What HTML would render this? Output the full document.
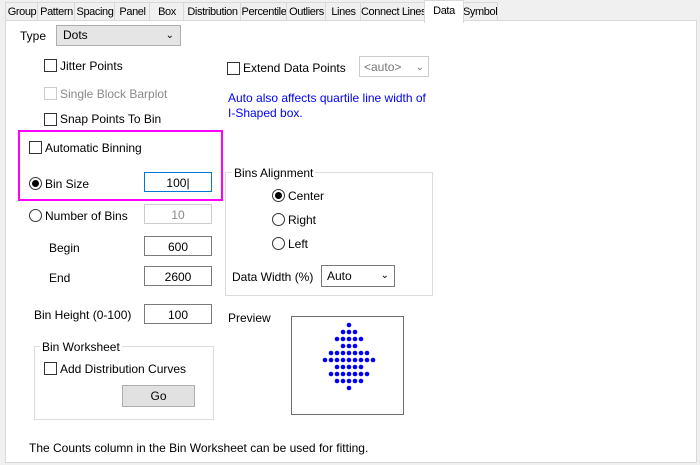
<!DOCTYPE html>
<html><head><style>
body{margin:0;width:700px;height:465px;background:#f0f0f0;font-family:"Liberation Sans",Arial,sans-serif;font-size:12px;color:#000;position:relative;overflow:hidden}
.a{position:absolute;white-space:nowrap}
.tab{position:absolute;top:2px;height:18px;border:1px solid #d9d9d9;border-bottom:none;background:#f0f0f0;font-size:11px;letter-spacing:-0.4px;line-height:18px;text-align:center;white-space:nowrap;overflow:hidden}
.panel{position:absolute;left:5px;top:20px;width:690px;height:441px;background:#fff;border:1px solid #d9d9d9}
.cb{position:absolute;width:11px;height:11px;border:1px solid #333;background:#fff}
.rb{position:absolute;width:11px;height:11px;border:1px solid #333;border-radius:50%;background:#fff}
.rb.on::after{content:"";position:absolute;left:2px;top:2px;width:7px;height:7px;border-radius:50%;background:#000}
.in{position:absolute;height:20px;border:1px solid #7a7a7a;background:#fff;text-align:center;line-height:20px;box-sizing:border-box}
.dd{position:absolute;height:21px;border:1px solid #adadad;background:#e5e5e5;box-sizing:border-box;line-height:19px;padding-left:6px}
.grp{position:absolute;border:1px solid #dcdcdc}
</style></head><body>
<div class="tab" style="left:5px;width:32px">Group</div>
<div class="tab" style="left:37px;width:37px">Pattern</div>
<div class="tab" style="left:74px;width:40px">Spacing</div>
<div class="tab" style="left:114px;width:35px">Panel</div>
<div class="tab" style="left:149px;width:34px">Box</div>
<div class="tab" style="left:183px;width:57px">Distribution</div>
<div class="tab" style="left:240px;width:46px">Percentile</div>
<div class="tab" style="left:286px;width:39px">Outliers</div>
<div class="tab" style="left:325px;width:35px">Lines</div>
<div class="tab" style="left:360px;width:64px">Connect Lines</div>
<div class="tab" style="left:462px;width:34px">Symbol</div>
<div class="panel"></div>
<div class="tab" style="left:424px;top:0;width:38px;height:22px;background:#fff;line-height:20px;z-index:2">Data</div>

<div class="a" style="left:20px;top:29px">Type</div>
<div class="dd" style="left:56px;top:25px;width:125px">Dots<span style="position:absolute;right:6px;top:0;font-size:10px">&#8964;</span></div>

<div class="cb" style="left:44px;top:59px"></div><div class="a" style="left:60px;top:59px">Jitter Points</div>
<div class="cb" style="left:44px;top:87px;border-color:#ccc"></div><div class="a" style="left:60px;top:87px;color:#8a8a8a">Single Block Barplot</div>
<div class="cb" style="left:44px;top:113px"></div><div class="a" style="left:60px;top:112px">Snap Points To Bin</div>

<div class="cb" style="left:227px;top:62px"></div><div class="a" style="left:243px;top:61px">Extend Data Points</div>
<div class="a" style="left:359px;top:56px;width:70px;height:21px;border:1px solid #ccc;background:#fff;color:#777;line-height:21px;padding-left:4px;box-sizing:border-box">&lt;auto&gt;<span style="position:absolute;right:4px;font-size:10px">&#8964;</span></div>
<div class="a" style="left:228px;top:91px;color:#0000ff;line-height:15px">Auto also affects quartile line width of<br>I-Shaped box.</div>

<div class="a" style="left:18px;top:130px;width:201px;height:67px;border:2px solid #ff00ff"></div>
<div class="cb" style="left:29px;top:141px"></div><div class="a" style="left:45px;top:141px">Automatic Binning</div>
<div class="rb on" style="left:29px;top:177px"></div><div class="a" style="left:45px;top:177px">Bin Size</div>
<div class="in" style="left:144px;top:172px;width:68px;border-color:#0078d7">100|</div>

<div class="rb" style="left:29px;top:209px"></div><div class="a" style="left:45px;top:209px">Number of Bins</div>
<div class="in" style="left:144px;top:204px;width:68px;border-color:#ccc;color:#888">10</div>
<div class="a" style="left:49px;top:241px">Begin</div><div class="in" style="left:144px;top:236px;width:68px">600</div>
<div class="a" style="left:49px;top:271px">End</div><div class="in" style="left:144px;top:266px;width:68px">2600</div>
<div class="a" style="left:34px;top:308px">Bin Height (0-100)</div><div class="in" style="left:144px;top:304px;width:68px">100</div>

<div class="grp" style="left:34px;top:346px;width:178px;height:72px"></div>
<div class="a" style="left:40px;top:340px;background:#fff;padding:0 2px">Bin Worksheet</div>
<div class="cb" style="left:44px;top:362px"></div><div class="a" style="left:60px;top:362px">Add Distribution Curves</div>
<div class="a" style="left:122px;top:385px;width:73px;height:22px;border:1px solid #adadad;background:#e1e1e1;text-align:center;line-height:21px;box-sizing:border-box">Go</div>

<div class="grp" style="left:225px;top:172px;width:206px;height:122px"></div>
<div class="a" style="left:232px;top:166px;background:#fff;padding:0 2px">Bins Alignment</div>
<div class="rb on" style="left:272px;top:189px"></div><div class="a" style="left:288px;top:189px">Center</div>
<div class="rb" style="left:272px;top:213px"></div><div class="a" style="left:288px;top:213px">Right</div>
<div class="rb" style="left:272px;top:237px"></div><div class="a" style="left:288px;top:237px">Left</div>
<div class="a" style="left:232px;top:270px">Data Width (%)</div>
<div class="a" style="left:321px;top:265px;width:74px;height:22px;border:1px solid #7a7a7a;background:#fff;line-height:20px;padding-left:5px;box-sizing:border-box">Auto<span style="position:absolute;right:5px;font-size:10px">&#8964;</span></div>

<div class="a" style="left:228px;top:311px">Preview</div>
<div class="a" style="left:291px;top:316px;width:113px;height:99px;border:1px solid #6d6d6d;box-sizing:border-box"></div>
<svg class="a" style="left:0;top:0" width="700" height="465">
<g fill="#0000ff" id="d"></g>
</svg>
<div class="a" style="left:29px;top:441px">The Counts column in the Bin Worksheet can be used for fitting.</div>
<script>
var rows=[1,3,5,3,7,9,5,7,5,1],g=document.getElementById('d'),s='';
rows.forEach(function(n,i){var y=325+i*7;for(var k=0;k<n;k++){var x=349+(k-(n-1)/2)*6;s+='<circle cx="'+x+'" cy="'+y+'" r="2.3"/>';}});
g.innerHTML=s;
</script>
</body></html>
